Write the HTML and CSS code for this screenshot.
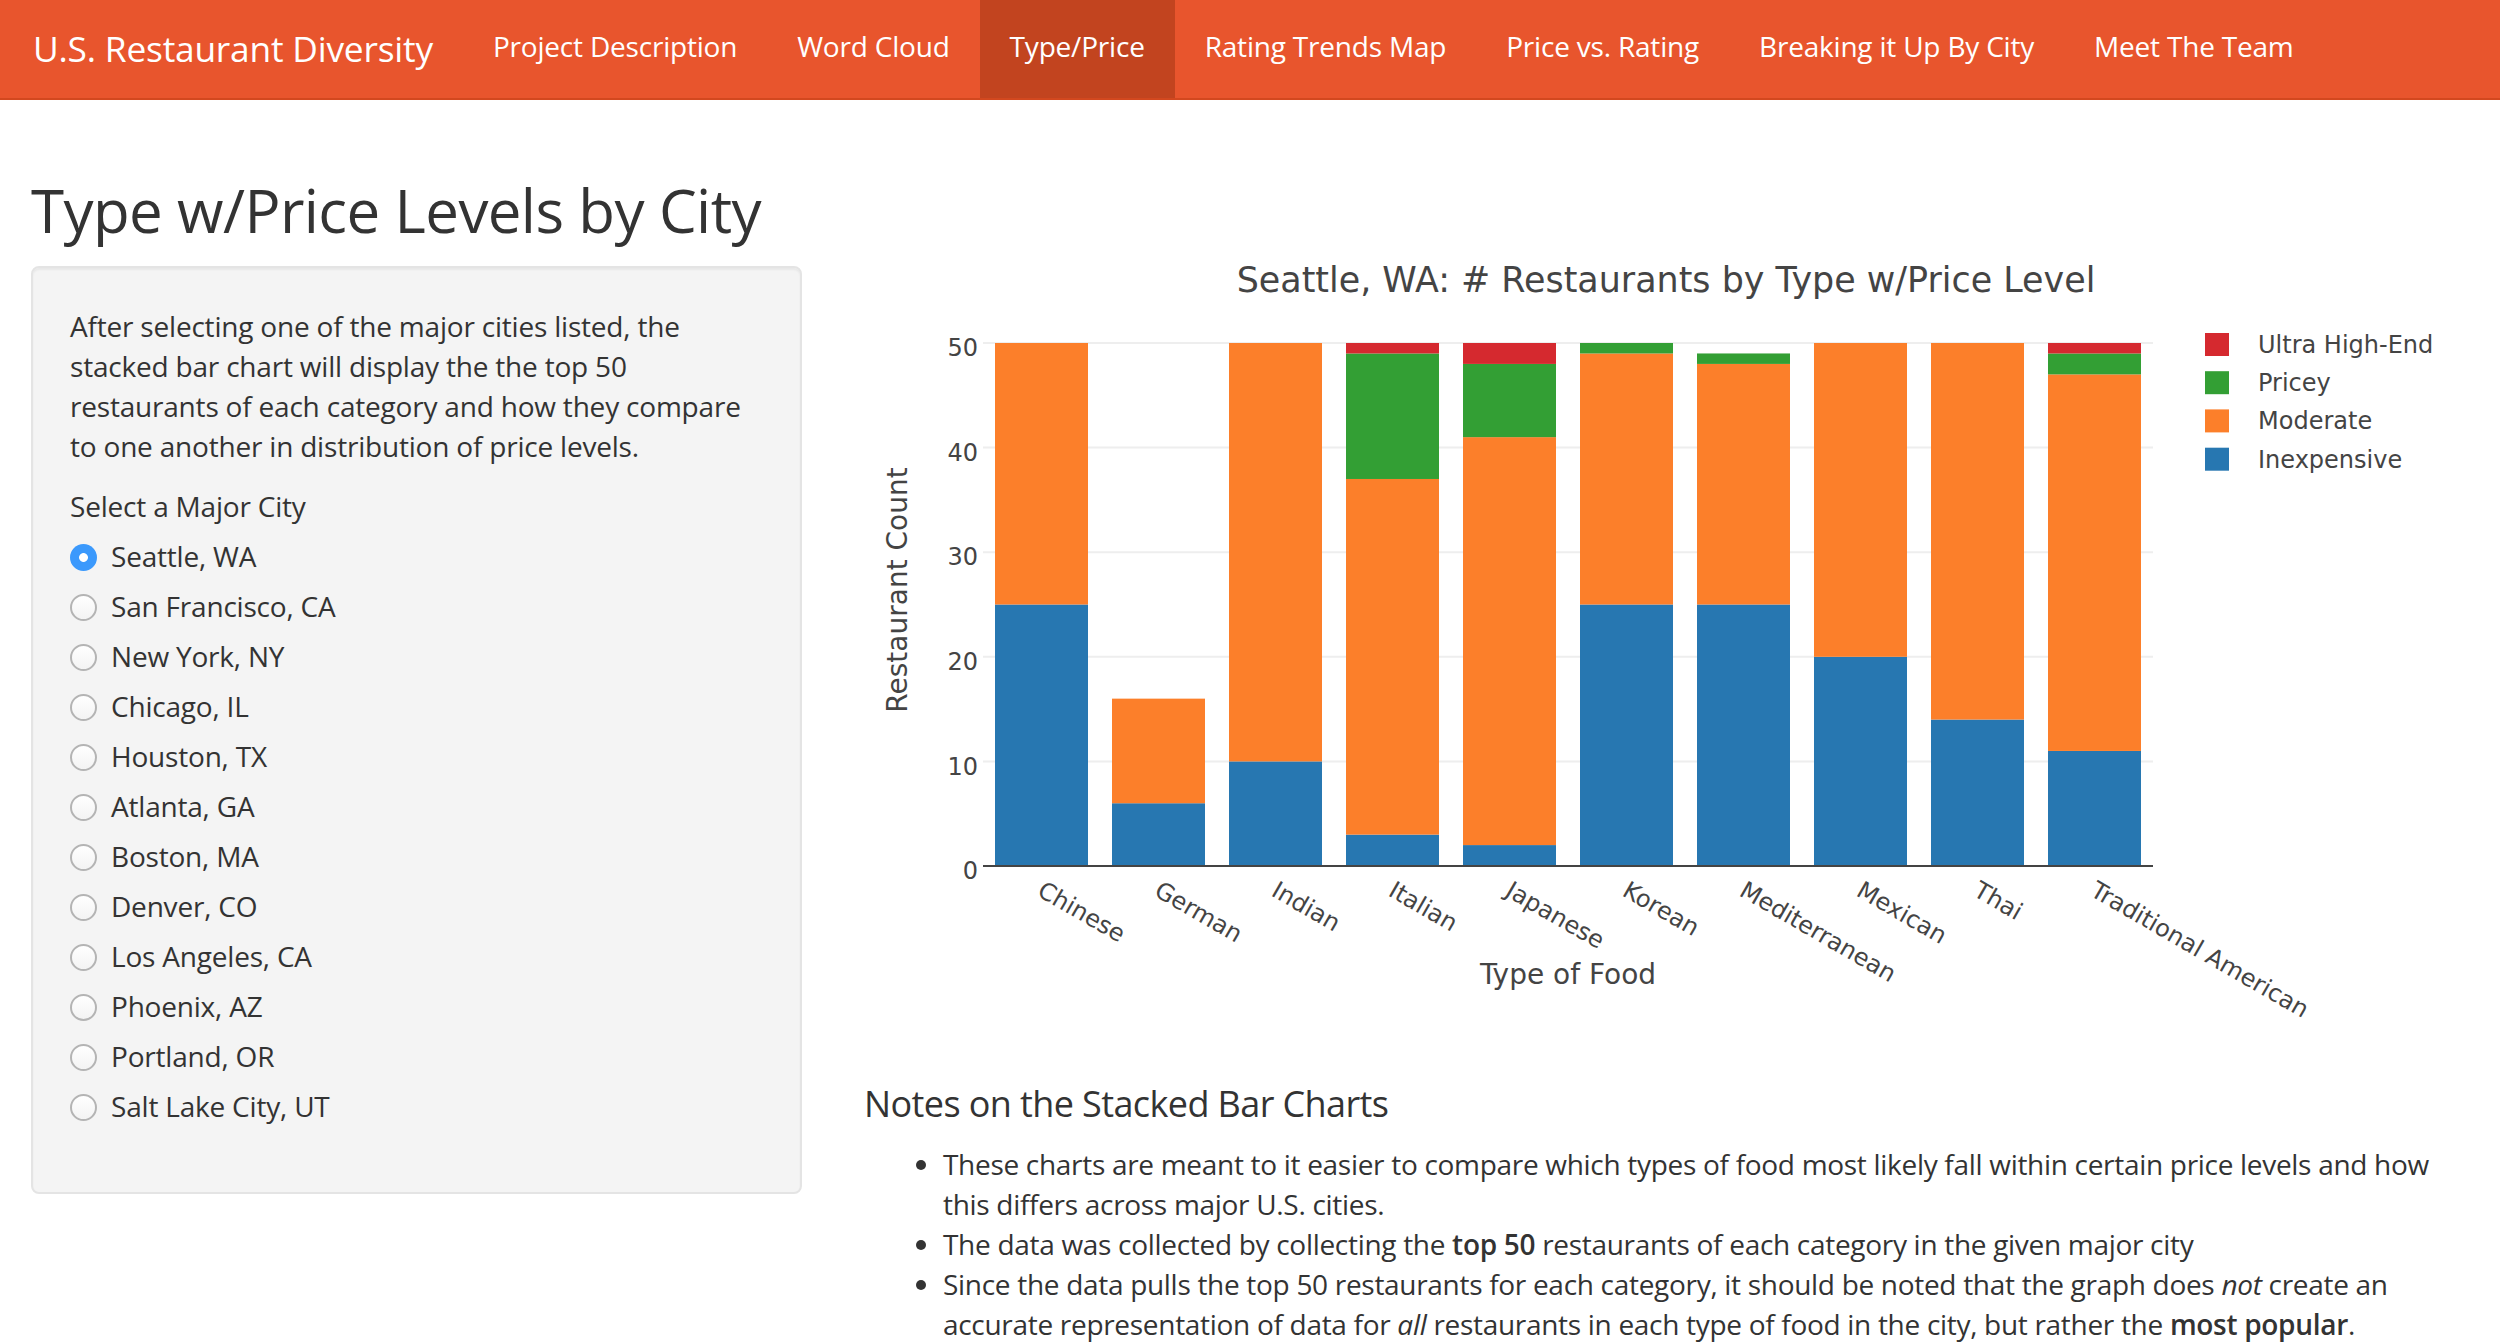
FILE: index.html
```html
<!DOCTYPE html>
<html lang="en">
<head>
<meta charset="utf-8">
<title>U.S. Restaurant Diversity</title>
<link rel="stylesheet" href="styles.css">
</head>
<body>
<nav class="navbar">
  <div class="brand">U.S. Restaurant Diversity</div>
  <ul class="nav-links">
    <li><a href="#">Project Description</a></li>
    <li><a href="#">Word Cloud</a></li>
    <li class="active"><a href="#">Type/Price</a></li>
    <li><a href="#">Rating Trends Map</a></li>
    <li><a href="#">Price vs. Rating</a></li>
    <li><a href="#">Breaking it Up By City</a></li>
    <li><a href="#">Meet The Team</a></li>
  </ul>
</nav>

<div class="page">
  <h2 class="page-title">Type w/Price Levels by City</h2>
  <div class="layout">
    <aside class="well">
      <p>After selecting one of the major cities listed, the stacked bar chart will display the the top 50 restaurants of each category and how they compare to one another in distribution of price levels.</p>
      <div class="control-label">Select a Major City</div>
      <div class="radios">
        <label class="radio"><input type="radio" name="city" checked><span>Seattle, WA</span></label>
        <label class="radio"><input type="radio" name="city"><span>San Francisco, CA</span></label>
        <label class="radio"><input type="radio" name="city"><span>New York, NY</span></label>
        <label class="radio"><input type="radio" name="city"><span>Chicago, IL</span></label>
        <label class="radio"><input type="radio" name="city"><span>Houston, TX</span></label>
        <label class="radio"><input type="radio" name="city"><span>Atlanta, GA</span></label>
        <label class="radio"><input type="radio" name="city"><span>Boston, MA</span></label>
        <label class="radio"><input type="radio" name="city"><span>Denver, CO</span></label>
        <label class="radio"><input type="radio" name="city"><span>Los Angeles, CA</span></label>
        <label class="radio"><input type="radio" name="city"><span>Phoenix, AZ</span></label>
        <label class="radio"><input type="radio" name="city"><span>Portland, OR</span></label>
        <label class="radio"><input type="radio" name="city"><span>Salt Lake City, UT</span></label>
      </div>
    </aside>

    <main class="main">
      <svg class="chart" width="1607" height="808" viewBox="863 256 1607 808" xmlns="http://www.w3.org/2000/svg">
        <text class="chart-title" x="1666" y="292" text-anchor="middle">Seattle, WA: # Restaurants by Type w/Price Level</text>

        <g class="grid">
          <line x1="983" x2="2153" y1="761.4" y2="761.4"/>
          <line x1="983" x2="2153" y1="656.8" y2="656.8"/>
          <line x1="983" x2="2153" y1="552.2" y2="552.2"/>
          <line x1="983" x2="2153" y1="447.6" y2="447.6"/>
          <line x1="983" x2="2153" y1="343" y2="343"/>
        </g>

        <g class="bars">
          <!-- Chinese -->
          <rect class="inexp" x="995" y="604.5" width="93" height="261.5"/>
          <rect class="moder" x="995" y="343" width="93" height="261.5"/>
          <!-- German -->
          <rect class="inexp" x="1112" y="803.24" width="93" height="62.76"/>
          <rect class="moder" x="1112" y="698.64" width="93" height="104.6"/>
          <!-- Indian -->
          <rect class="inexp" x="1229" y="761.4" width="93" height="104.6"/>
          <rect class="moder" x="1229" y="343" width="93" height="418.4"/>
          <!-- Italian -->
          <rect class="inexp" x="1346" y="834.62" width="93" height="31.38"/>
          <rect class="moder" x="1346" y="478.98" width="93" height="355.64"/>
          <rect class="pricey" x="1346" y="353.46" width="93" height="125.52"/>
          <rect class="ultra" x="1346" y="343" width="93" height="10.46"/>
          <!-- Japanese -->
          <rect class="inexp" x="1463" y="845.08" width="93" height="20.92"/>
          <rect class="moder" x="1463" y="437.14" width="93" height="407.94"/>
          <rect class="pricey" x="1463" y="363.92" width="93" height="73.22"/>
          <rect class="ultra" x="1463" y="343" width="93" height="20.92"/>
          <!-- Korean -->
          <rect class="inexp" x="1580" y="604.5" width="93" height="261.5"/>
          <rect class="moder" x="1580" y="353.46" width="93" height="251.04"/>
          <rect class="pricey" x="1580" y="343" width="93" height="10.46"/>
          <!-- Mediterranean -->
          <rect class="inexp" x="1697" y="604.5" width="93" height="261.5"/>
          <rect class="moder" x="1697" y="363.92" width="93" height="240.58"/>
          <rect class="pricey" x="1697" y="353.46" width="93" height="10.46"/>
          <!-- Mexican -->
          <rect class="inexp" x="1814" y="656.8" width="93" height="209.2"/>
          <rect class="moder" x="1814" y="343" width="93" height="313.8"/>
          <!-- Thai -->
          <rect class="inexp" x="1931" y="719.56" width="93" height="146.44"/>
          <rect class="moder" x="1931" y="343" width="93" height="376.56"/>
          <!-- Traditional American -->
          <rect class="inexp" x="2048" y="750.94" width="93" height="115.06"/>
          <rect class="moder" x="2048" y="374.38" width="93" height="376.56"/>
          <rect class="pricey" x="2048" y="353.46" width="93" height="20.92"/>
          <rect class="ultra" x="2048" y="343" width="93" height="10.46"/>
        </g>

        <line class="zeroline" x1="983" x2="2153" y1="866" y2="866"/>

        <g class="tick">
          <text x="978" y="879" text-anchor="end">0</text>
          <text x="978" y="774.6" text-anchor="end">10</text>
          <text x="978" y="670" text-anchor="end">20</text>
          <text x="978" y="565.4" text-anchor="end">30</text>
          <text x="978" y="460.8" text-anchor="end">40</text>
          <text x="978" y="356.2" text-anchor="end">50</text>
        </g>

        <g class="tick">
          <text x="1036" y="895" transform="rotate(30 1036 895)">Chinese</text>
          <text x="1153" y="895" transform="rotate(30 1153 895)">German</text>
          <text x="1270" y="895" transform="rotate(30 1270 895)">Indian</text>
          <text x="1387" y="895" transform="rotate(30 1387 895)">Italian</text>
          <text x="1504" y="895" transform="rotate(30 1504 895)">Japanese</text>
          <text x="1621" y="895" transform="rotate(30 1621 895)">Korean</text>
          <text x="1738" y="895" transform="rotate(30 1738 895)">Mediterranean</text>
          <text x="1855" y="895" transform="rotate(30 1855 895)">Mexican</text>
          <text x="1972" y="895" transform="rotate(30 1972 895)">Thai</text>
          <text x="2089" y="895" transform="rotate(30 2089 895)">Traditional American</text>
        </g>

        <text class="axis-title" x="1568" y="984" text-anchor="middle">Type of Food</text>
        <text class="axis-title" x="907" y="590" text-anchor="middle" transform="rotate(-90 907 590)">Restaurant Count</text>

        <g class="legend">
          <rect class="ultra" x="2205" y="333" width="24" height="23"/>
          <text x="2258" y="353">Ultra High-End</text>
          <rect class="pricey" x="2205" y="371.2" width="24" height="23"/>
          <text x="2258" y="391.2">Pricey</text>
          <rect class="moder" x="2205" y="409.4" width="24" height="23"/>
          <text x="2258" y="429.4">Moderate</text>
          <rect class="inexp" x="2205" y="447.7" width="24" height="23"/>
          <text x="2258" y="467.7">Inexpensive</text>
        </g>
      </svg>

      <section class="notes">
        <h4>Notes on the Stacked Bar Charts</h4>
        <ul>
          <li>These charts are meant to it easier to compare which types of food most likely fall within certain price levels and how this differs across major U.S. cities.</li>
          <li>The data was collected by collecting the <strong>top 50</strong> restaurants of each category in the given major city</li>
          <li>Since the data pulls the top 50 restaurants for each category, it should be noted that the graph does <em>not</em> create an accurate representation of data for <em>all</em> restaurants in each type of food in the city, but rather the <strong>most popular</strong>.</li>
        </ul>
      </section>
    </main>
  </div>
</div>
</body>
</html>
```

FILE: styles.css
```css
html, body {
  margin: 0;
  padding: 0;
  background: #ffffff;
}

body {
  font-family: "Open Sans", "Noto Sans", "DejaVu Sans", sans-serif;
  font-size: 28px;
  line-height: 40px;
  color: #333333;
  letter-spacing: -0.2px;
}

/* ---------- Navbar ---------- */
.navbar {
  display: flex;
  align-items: stretch;
  height: 98px;
  background: #e8552d;
  border-bottom: 2px solid #d2481f;
  padding-left: 3px;
}

.brand {
  padding: 28px 30px 0 30px;
  font-size: 35.3px;
  line-height: 40px;
  color: #ffffff;
  white-space: nowrap;
}

.nav-links {
  display: flex;
  list-style: none;
  margin: 0;
  padding: 0;
}

.nav-links a {
  display: block;
  height: 98px;
  box-sizing: border-box;
  padding: 26px 30px 0 30px;
  font-size: 28px;
  line-height: 40px;
  color: #ffffff;
  text-decoration: none;
  white-space: nowrap;
}

.nav-links .active a {
  background: #c2441f;
}

/* ---------- Page ---------- */
.page {
  padding: 0 30px 0 31px;
}

.page-title {
  margin: 77px 0 13px 0;
  font-size: 60px;
  line-height: 66px;
  font-weight: 400;
  letter-spacing: -0.6px;
  color: #333333;
}

.layout {
  display: grid;
  grid-template-columns: 771px 1fr;
  column-gap: 61px;
  align-items: start;
}

/* ---------- Sidebar well ---------- */
.well {
  margin-top: 10px;
  background: #f4f4f4;
  border: 2px solid #e4e4e4;
  border-radius: 8px;
  padding: 38px 38px 38px 37px;
  box-shadow: inset 0 2px 2px rgba(0, 0, 0, 0.05);
}

.well p {
  margin: 0 0 20px 0;
}

.control-label {
  margin-bottom: 10px;
}

.radios {
  display: flex;
  flex-direction: column;
  gap: 10px;
  margin-bottom: 28px;
}

.radio {
  display: flex;
  align-items: center;
  height: 40px;
  gap: 14px;
}

.radio input {
  appearance: none;
  -webkit-appearance: none;
  margin: 2px 0 0 0;
  width: 27px;
  height: 27px;
  box-sizing: border-box;
  border-radius: 50%;
  border: 2px solid #b4b4b4;
  background: linear-gradient(#ffffff, #f3f3f3);
  flex: none;
}

.radio input:checked {
  border: none;
  background: radial-gradient(circle, #ffffff 0 4px, #3b99fc 4.8px);
}

/* ---------- Chart ---------- */
.chart {
  display: block;
  letter-spacing: 0;
}

.chart text {
  font-family: "DejaVu Sans", Verdana, sans-serif;
  fill: #444444;
}

.chart-title {
  font-size: 34.9px;
}

.tick text {
  font-size: 24px;
}

.axis-title {
  font-size: 28px;
}

.legend text {
  font-size: 24px;
}

.grid line {
  stroke: #eeeeee;
  stroke-width: 2;
}

.zeroline {
  stroke: #444444;
  stroke-width: 2;
}

.inexp { fill: #2777b1; }
.moder { fill: #fc7f2a; }
.pricey { fill: #339f34; }
.ultra { fill: #d5292f; }

/* ---------- Notes ---------- */
.notes h4 {
  margin: 20px 0 20px 1px;
  font-size: 36px;
  line-height: 39.6px;
  font-weight: 400;
  letter-spacing: -0.6px;
}

.notes ul {
  margin: 0;
  padding-left: 80px;
  letter-spacing: -0.3px;
}

.notes strong {
  font-weight: 600;
}
```
